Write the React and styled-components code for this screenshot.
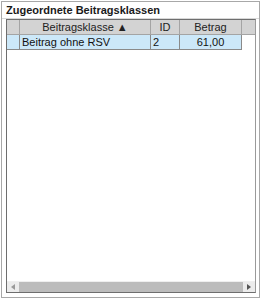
import React from "react";
import styled, { createGlobalStyle } from "styled-components";

const Global = createGlobalStyle`
  html, body { margin: 0; padding: 0; background: #ffffff; }
  body { font-family: "Liberation Sans", Arial, sans-serif; }
`;

const Panel = styled.div`
  box-sizing: border-box;
  margin: 1px 0 0 1px;
  width: 259px;
  height: 297px;
  border: 1px solid #a8a8a8;
  display: flex;
  flex-direction: column;
  background: #fff;
`;

const Title = styled.div`
  height: 16px;
  padding-left: 4px;
  font-size: 11px;
  font-weight: bold;
  line-height: 16px;
  color: #1a1a1a;
  border-bottom: 1px solid #d8d8d8;
`;

const Frame = styled.div`
  box-sizing: border-box;
  margin: 0 3px 4px 4px;
  flex: 1;
  border: 1px solid #6e6e6e;
  border-right-color: #9a9a9a;
  display: flex;
  flex-direction: column;
`;

const Body = styled.div`
  flex: 1;
`;

const Row = styled.div`
  display: grid;
  grid-template-columns: 13px 131px 29px 62px 1fr;
  height: 15px;
  font-size: 11px;
  line-height: 14px;
`;

const HeadCell = styled.div`
  box-sizing: border-box;
  background: #d3d3d3;
  border-right: 1px solid #a4a4a4;
  border-bottom: 1px solid #a4a4a4;
  text-align: center;
  color: #222;
  &:last-child { border-right: none; }
`;

const Cell = styled.div`
  box-sizing: border-box;
  background: ${(p) => (p.$blank ? "#fff" : "#cce8f9")};
  border-right: ${(p) => (p.$blank ? "none" : "1px solid #8a8a8a")};
  border-bottom: ${(p) => (p.$blank ? "none" : "1px solid #8a8a8a")};
  text-align: ${(p) => p.$align || "left"};
  padding: 0 ${(p) => (p.$align === "center" ? 0 : 2)}px;
  color: #111;
`;

const Scroll = styled.div`
  display: grid;
  grid-template-columns: 12px 1fr 12px;
  height: 10px;
  background: #e6e6e6;
  border-top: 1px solid #efefef;
`;

const Arrow = styled.div`
  display: flex;
  align-items: center;
  justify-content: center;
  background: #ececec;
`;

const Thumb = styled.div`
  background: #bcbcbc;
`;

export default function App() {
  return (
    <>
      <Global />
      <Panel>
        <Title>Zugeordnete Beitragsklassen</Title>
        <Frame>
          <Body>
            <Row>
              <HeadCell />
              <HeadCell>Beitragsklasse ▲</HeadCell>
              <HeadCell>ID</HeadCell>
              <HeadCell>Betrag</HeadCell>
              <HeadCell />
            </Row>
            <Row>
              <Cell />
              <Cell>Beitrag ohne RSV</Cell>
              <Cell>2</Cell>
              <Cell $align="center">61,00</Cell>
              <Cell $blank />
            </Row>
          </Body>
          <Scroll>
            <Arrow>
              <svg width="4" height="6" viewBox="0 0 4 6"><path d="M4 0L0 3L4 6Z" fill="#9a9a9a" /></svg>
            </Arrow>
            <Thumb />
            <Arrow>
              <svg width="4" height="6" viewBox="0 0 4 6"><path d="M0 0L4 3L0 6Z" fill="#555" /></svg>
            </Arrow>
          </Scroll>
        </Frame>
      </Panel>
    </>
  );
}
